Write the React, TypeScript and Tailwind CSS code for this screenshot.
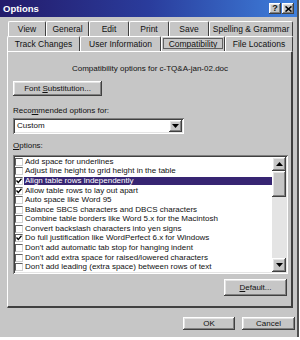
import React from 'react'

// Win2000-style bevels
const raised =
  'shadow-[inset_-1px_-1px_#404040,inset_1px_1px_#ffffff,inset_-2px_-2px_#808080,inset_2px_2px_#e4e4e4]'
const sunken =
  'shadow-[inset_1px_1px_#808080,inset_-1px_-1px_#ffffff,inset_2px_2px_#404040,inset_-2px_-2px_#e4e4e4]'

const font = "font-['Liberation_Sans','DejaVu_Sans',sans-serif]"

const row1 = [
  { label: 'View', w: 'w-[38px]' },
  { label: 'General', w: 'w-[43px]' },
  { label: 'Edit', w: 'w-[40px]' },
  { label: 'Print', w: 'w-[40px]' },
  { label: 'Save', w: 'w-[40px]' },
  { label: 'Spelling & Grammar', w: 'w-[84px]' },
]

const row2 = [
  { label: 'Track Changes', w: 'w-[73px]' },
  { label: 'User Information', w: 'w-[81px]' },
  { label: 'Compatibility', w: 'w-[64px]', active: true },
  { label: 'File Locations', w: 'w-[68px]' },
]

const options = [
  { text: 'Add space for underlines' },
  { text: 'Adjust line height to grid height in the table' },
  { text: 'Align table rows independently', checked: true, selected: true },
  { text: 'Allow table rows to lay out apart', checked: true },
  { text: 'Auto space like Word 95' },
  { text: 'Balance SBCS characters and DBCS characters' },
  { text: 'Combine table borders like Word 5.x for the Macintosh' },
  { text: 'Convert backslash characters into yen signs' },
  { text: 'Do full justification like WordPerfect 6.x for Windows', checked: true },
  { text: "Don't add automatic tab stop for hanging indent" },
  { text: "Don't add extra space for raised/lowered characters" },
  { text: "Don't add leading (extra space) between rows of text" },
]

function Arrow({ up }: { up?: boolean }) {
  return (
    <svg width="7" height="4" viewBox="0 0 7 4">
      <path d={up ? 'M3.5 0 L7 4 L0 4 Z' : 'M0 0 L7 0 L3.5 4 Z'} fill="#000" />
    </svg>
  )
}

function Tab({ label, w, active }: { label: string; w: string; active?: boolean }) {
  return (
    <div
      className={`${w} h-[15px] flex items-center justify-center rounded-t-[2px] border-l border-t border-r border-l-white border-t-white border-r-[#404040] text-[8.5px] leading-none ${
        active ? 'outline outline-1 outline-[#606060] -outline-offset-3' : ''
      }`}
    >
      {label}
    </div>
  )
}

export default function App() {
  return (
    <div className={`w-[300px] h-[340px] bg-white text-[#111] ${font}`}>
      <div className="w-[299px] h-[337px] bg-[#c6c6c6] border-r-2 border-[#505050] flex flex-col">
        {/* title bar */}
        <div className="h-[17px] flex items-center justify-between pl-[3px] pr-[3px] bg-gradient-to-r from-[#231b6b] via-[#2a3c9c] to-[#3f80dc]">
          <span className="text-white font-bold text-[9.5px] leading-none">Options</span>
          <div className="flex gap-[1px]">
            <div className={`w-[12px] h-[11px] bg-[#c6c6c6] flex items-center justify-center text-[9px] font-bold leading-none ${raised}`}>?</div>
            <div className={`w-[12px] h-[11px] bg-[#c6c6c6] flex items-center justify-center ${raised}`}>
              <svg width="7" height="6" viewBox="0 0 7 6">
                <path d="M0.5 0.5 L6.5 5.5 M6.5 0.5 L0.5 5.5" stroke="#000" strokeWidth="1.6" />
              </svg>
            </div>
          </div>
        </div>

        {/* tabs */}
        <div className="mt-[4px] pl-[8px] flex">
          {row1.map(t => (
            <Tab key={t.label} {...t} />
          ))}
        </div>
        <div className="pl-[7px] flex">
          {row2.map(t => (
            <Tab key={t.label} {...t} />
          ))}
        </div>

        {/* panel */}
        <div className="ml-[7px] w-[286px] h-[257px] border-l border-t border-l-white border-t-white border-r-2 border-b-2 border-r-[#404040] border-b-[#404040] flex flex-col pl-[5px] pr-[4px] text-[8px] leading-[10px]">
          <div className="mt-[12px] text-center">Compatibility options for c-TQ&amp;A-jan-02.doc</div>

          <div className={`mt-[7px] w-[89px] h-[15px] flex items-center justify-center text-[8px] ${raised}`}>
            <span>
              Font <span className="underline">S</span>ubstitution...
            </span>
          </div>

          <div className="mt-[10px]">
            Reco<span className="underline">m</span>mended options for:
          </div>

          <div className={`mt-[2px] w-[171px] h-[16px] bg-white flex items-center justify-between p-[2px] ${sunken}`}>
            <span className="pl-[2px]">Custom</span>
            <div className={`w-[13px] h-[12px] bg-[#c6c6c6] flex items-center justify-center ${raised}`}>
              <Arrow />
            </div>
          </div>

          <div className="mt-[7px]">
            <span className="underline">O</span>ptions:
          </div>

          <div className={`mt-[4px] w-[275px] h-[119px] bg-white flex p-[2px] ${sunken}`}>
            <div className="flex-1 flex flex-col">
              {options.map(o => (
                <div key={o.text} className="h-[9.6px] flex items-center">
                  <div className="w-[8px] h-[8px] bg-white border border-[#606060] border-r-[#d0d0d0] border-b-[#d0d0d0] flex items-center justify-center shrink-0">
                    {o.checked && (
                      <svg width="6" height="6" viewBox="0 0 6 6">
                        <path d="M0.5 2.5 L2.3 4.5 L5.5 0.8" stroke="#000" strokeWidth="1.3" fill="none" />
                      </svg>
                    )}
                  </div>
                  <div
                    className={`flex-1 h-[8.5px] ml-[1px] pl-[1px] flex items-center whitespace-nowrap overflow-hidden ${
                      o.selected ? 'bg-[#372572] text-white' : ''
                    }`}
                  >
                    {o.text}
                  </div>
                </div>
              ))}
            </div>
            {/* scrollbar */}
            <div className="w-[14px] flex flex-col bg-[#e4e4e4]">
              <div className={`h-[14px] bg-[#c6c6c6] flex items-center justify-center ${raised}`}>
                <Arrow up />
              </div>
              <div className={`h-[26px] bg-[#c6c6c6] ${raised}`} />
              <div className="flex-1" />
              <div className={`h-[14px] bg-[#c6c6c6] flex items-center justify-center ${raised}`}>
                <Arrow />
              </div>
            </div>
          </div>

          <div className="mt-[5px] flex justify-end">
            <div className={`w-[63px] h-[17px] flex items-center justify-center ${raised}`}>
              <span>
                <span className="underline">D</span>efault...
              </span>
            </div>
          </div>
        </div>

        {/* bottom buttons */}
        <div className="mt-[9px] flex justify-end gap-[7px] pr-[2px] text-[8px]">
          <div className={`w-[52px] h-[13px] flex items-center justify-center ${raised}`}>OK</div>
          <div className={`w-[53px] h-[13px] flex items-center justify-center ${raised}`}>Cancel</div>
        </div>
      </div>
    </div>
  )
}
